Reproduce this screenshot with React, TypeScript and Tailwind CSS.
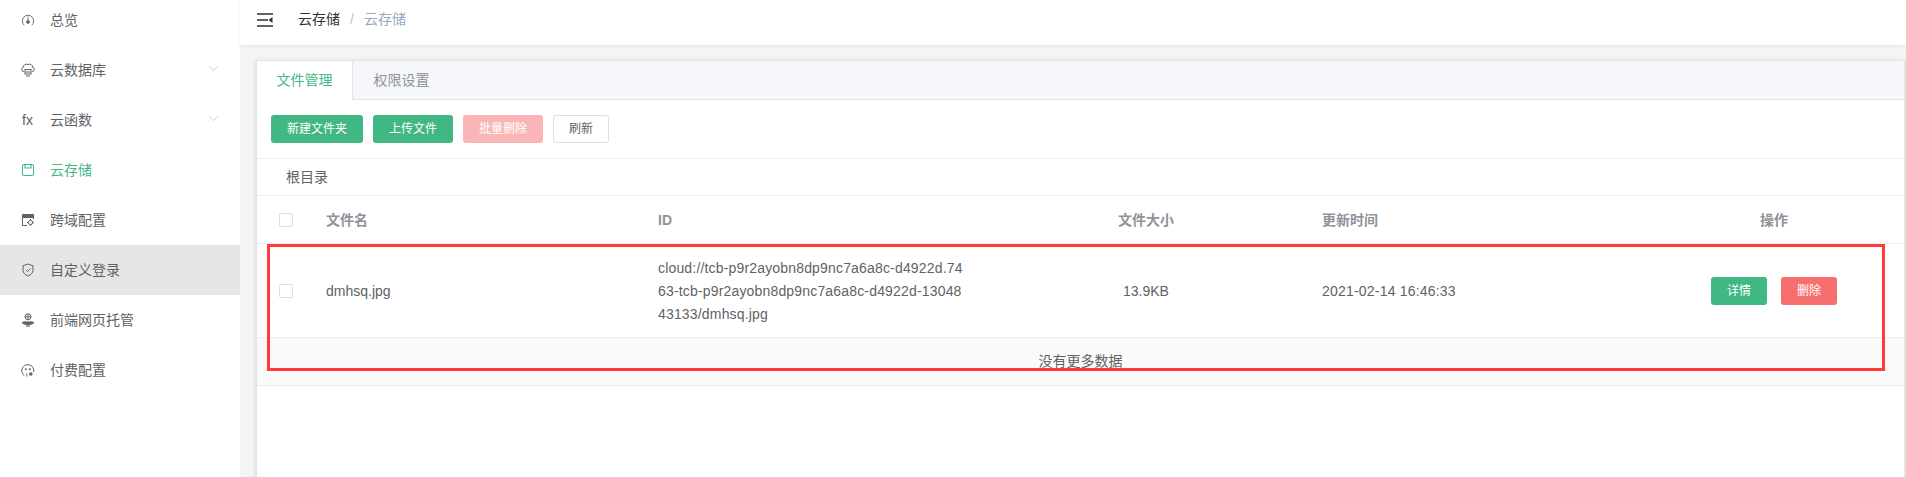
import React from "react";
import { ChevronDown } from "lucide-react";

const Gauge = () => (
  <svg width="14" height="14" viewBox="0 0 14 14" fill="none" stroke="currentColor" strokeWidth="0.9">
    <path d="M3.2 12.2A5.7 5.7 0 1 1 10.8 12.2" />
    <path d="M7 3.5v4" />
    <circle cx="7" cy="9" r="1.4" fill="currentColor" />
  </svg>
);

const CloudDb = () => (
  <svg width="14" height="14" viewBox="0 0 14 14" fill="none" stroke="currentColor" strokeWidth="1">
    <path d="M3 8.5H2.2A1.9 1.9 0 0 1 2 4.8 3.4 3.4 0 0 1 7 1.6a3 3 0 0 1 4.6 2.8 2.1 2.1 0 0 1 .2 4.1H11" />
    <rect x="4" y="6.5" width="6" height="4.5" />
    <path d="M4.5 9h5M5 13h4" strokeWidth="1.2" />
  </svg>
);

const Storage = () => (
  <svg width="14" height="14" viewBox="0 0 14 14" fill="none" stroke="currentColor" strokeWidth="1.1">
    <rect x="1.5" y="1.5" width="11" height="11" rx="1.5" />
    <path d="M4 1.5v3.5h6V1.5" />
  </svg>
);

const Cors = () => (
  <svg width="14" height="14" viewBox="0 0 14 14" fill="none" stroke="currentColor" strokeWidth="1">
    <path d="M6 12.5H1.5v-11h11V6" />
    <path d="M1.5 2h11v2.5h-11z" fill="currentColor" />
    <circle cx="9.5" cy="9.5" r="2.2" />
    <path d="M9.5 6v1.2M9.5 11.8V13M6 9.5h1.2M11.8 9.5H13" />
  </svg>
);

const Shield = () => (
  <svg width="14" height="14" viewBox="0 0 14 14" fill="none" stroke="currentColor" strokeWidth="1">
    <path d="M7 1l5 1.8v4.4c0 2.8-2.2 4.6-5 5.8-2.8-1.2-5-3-5-5.8V2.8z" />
    <path d="M4.8 6.8L6.5 8.5l3-3" />
  </svg>
);

const Hosting = () => (
  <svg width="14" height="14" viewBox="0 0 14 14" fill="none" stroke="currentColor" strokeWidth="1">
    <circle cx="7" cy="3.8" r="3" />
    <path d="M4 3.8h6M7 .8v6" />
    <path d="M1 9.8c2-1.4 4-.8 6-.8s4-.6 6 .8c-1.6 1.4-3.6 1.8-6 1.8s-4.4-.4-6-1.8z" fill="currentColor" />
    <path d="M5 13h4" strokeWidth="1.2" />
  </svg>
);

const Billing = () => (
  <svg width="14" height="14" viewBox="0 0 14 14" fill="none" stroke="currentColor" strokeWidth="1">
    <path d="M3.4 12.6A6 6 0 1 1 12.6 9" />
    <circle cx="4.8" cy="6.2" r=".6" fill="currentColor" />
    <circle cx="8.8" cy="6.2" r=".6" fill="currentColor" />
    <path d="M5.5 13h1M5.8 10.5v2" />
    <circle cx="9.8" cy="11" r="1.8" fill="currentColor" stroke="none" />
  </svg>
);

const Fold = () => (
  <svg width="16" height="14" viewBox="0 0 16 14" fill="none">
    <path d="M0 1h16M0 7h11M0 13h16" stroke="#303133" strokeWidth="1.6" />
    <path d="M15.5 4v6L11.5 7z" fill="#303133" />
  </svg>
);

const menu = [
  { name: "总览", icon: <Gauge /> },
  { name: "云数据库", icon: <CloudDb />, sub: true },
  { name: "云函数", icon: <span className="pl-[1px] text-[14px] leading-none">fx</span>, sub: true },
  { name: "云存储", icon: <Storage />, active: true },
  { name: "跨域配置", icon: <Cors /> },
  { name: "自定义登录", icon: <Shield />, hover: true },
  { name: "前端网页托管", icon: <Hosting /> },
  { name: "付费配置", icon: <Billing /> },
];

function Sidebar() {
  return (
    <aside className="w-[240px] shrink-0 bg-white -mt-[5px]">
      {menu.map((item) => (
        <div
          key={item.name}
          className={`h-[50px] flex items-center pl-[21px] pr-[18px] text-[14px] ${
            item.active ? "text-[#42b983]" : "text-[#606266]"
          } ${item.hover ? "bg-[#e6e6e6]" : ""}`}
        >
          <span className="w-[29px] shrink-0 flex items-center">{item.icon}</span>
          <span className="flex-1">{item.name}</span>
          {item.sub && <ChevronDown className="w-[17px] h-[17px] text-[#b4bccc] -mt-[3px]" strokeWidth={1} />}
        </div>
      ))}
    </aside>
  );
}

const cols = "grid grid-cols-[69px_332px_390px_196px_400px_260px] items-center";

export default function App() {
  return (
    <div
      className="flex h-[477px] w-[1906px] overflow-hidden bg-white text-[#606266]"
      style={{ fontFamily: '"Liberation Sans", "Noto Sans CJK SC", sans-serif' }}
    >
      <Sidebar />
      <div className="flex-1 min-w-0 flex flex-col bg-[#f4f4f4]">
        <header className="h-[45px] shrink-0 bg-white flex items-center pl-[17px] pb-[6px] text-[14px] shadow-[0_1px_4px_rgba(0,21,41,0.08)] relative">
          <Fold />
          <span className="ml-[25px] text-[#303133]">云存储</span>
          <span className="mx-[10px] text-[#c0c4cc]">/</span>
          <span className="text-[#97a8be]">云存储</span>
        </header>

        <main className="flex-1 pt-[15px] pl-[16px] pr-[1px]">
          <div className="relative h-[500px] bg-white border border-[#dfe4ed] shadow-[0_2px_4px_rgba(0,0,0,0.12),0_0_6px_rgba(0,0,0,0.04)]">
            {/* tabs */}
            <div className="h-[39px] flex bg-[#f5f7fa] border-b border-[#dfe4ed] text-[14px]">
              <div className="w-[96px] h-[39px] flex items-center justify-center bg-white border-r border-[#dfe4ed] text-[#42b983]">
                文件管理
              </div>
              <div className="w-[97px] flex items-center justify-center text-[#909399]">权限设置</div>
            </div>

            {/* toolbar */}
            <div className="h-[59px] flex items-start pt-[15px] pl-[14px] gap-[10px] border-b border-[#ebeef5] text-[12px]">
              <button className="w-[92px] h-[28px] rounded-[3px] bg-[#41b883] text-white">新建文件夹</button>
              <button className="w-[80px] h-[28px] rounded-[3px] bg-[#41b883] text-white">上传文件</button>
              <button className="w-[80px] h-[28px] rounded-[3px] bg-[#fab6b6] text-white">批量删除</button>
              <button className="w-[56px] h-[28px] rounded-[3px] bg-white border border-[#dcdfe6] text-[#606266]">刷新</button>
            </div>

            <div className="h-[37px] flex items-center pl-[29px] border-b border-[#ebeef5] text-[14px]">根目录</div>

            {/* table */}
            <div className={`${cols} h-[48px] border-b border-[#ebeef5] text-[14px] font-bold text-[#909399]`}>
              <span className="pl-[22px]">
                <span className="block w-[14px] h-[14px] rounded-[2px] border border-[#dcdfe6] bg-white" />
              </span>
              <span className="pt-[2px]">文件名</span>
              <span className="pt-[2px]">ID</span>
              <span className="pt-[2px] text-center">文件大小</span>
              <span className="pt-[2px] pl-[78px]">更新时间</span>
              <span className="pt-[2px] text-center">操作</span>
            </div>

            <div className={`${cols} h-[94px] border-b border-[#ebeef5] text-[14px]`}>
              <span className="pl-[22px]">
                <span className="block w-[14px] h-[14px] rounded-[2px] border border-[#dcdfe6] bg-white" />
              </span>
              <span className="pt-[2px]">dmhsq.jpg</span>
              <span className="pt-[2px] w-[306px] break-all leading-[23px] tracking-[0.17px]">
                cloud://tcb-p9r2ayobn8dp9nc7a6a8c-d4922d.7463-tcb-p9r2ayobn8dp9nc7a6a8c-d4922d-1304843133/dmhsq.jpg
              </span>
              <span className="pt-[2px] text-center">13.9KB</span>
              <span className="pt-[2px] pl-[78px] tracking-[0.2px]">2021-02-14 16:46:33</span>
              <span className="flex justify-center gap-[14px] text-[12px]">
                <button className="w-[56px] h-[28px] rounded-[3px] bg-[#41b883] text-white">详情</button>
                <button className="w-[56px] h-[28px] rounded-[3px] bg-[#f76e6e] text-white">删除</button>
              </span>
            </div>

            <div className="h-[48px] flex items-center justify-center bg-[#fafafa] border-b border-[#ebeef5] text-[14px]">
              没有更多数据
            </div>

            {/* red annotation drawn over the row */}
            <div className="absolute left-[10px] top-[183px] w-[1618px] h-[127px] border-[3px] border-[#ff3b3b]" />
          </div>
        </main>
      </div>
    </div>
  );
}
